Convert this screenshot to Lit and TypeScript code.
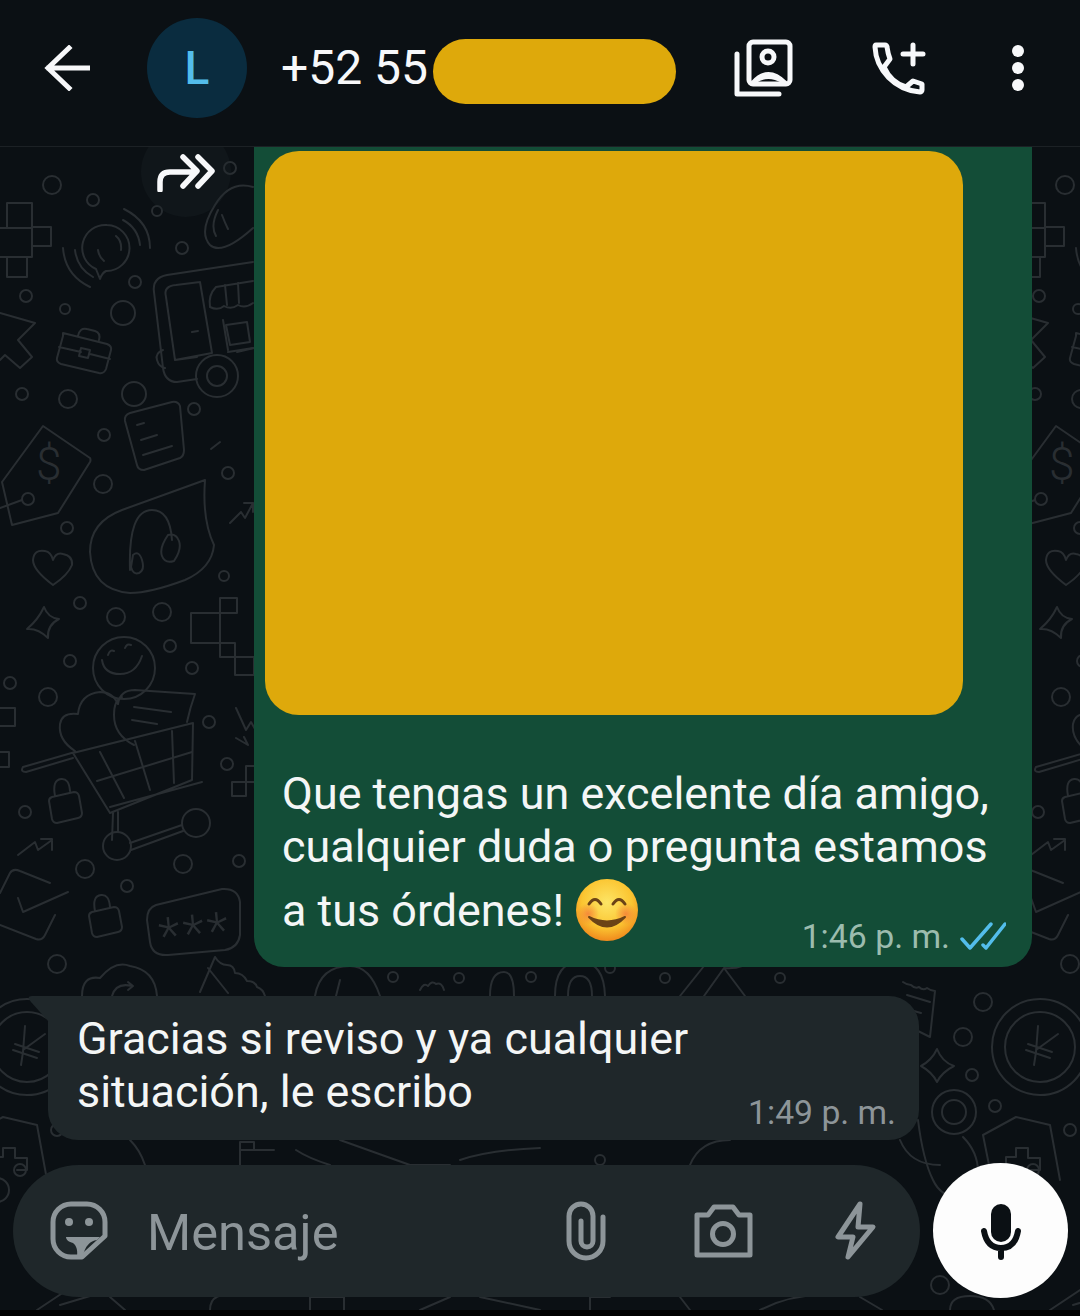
import { LitElement, html, css, svg } from "lit";
import { customElement } from "lit/decorators.js";

const circles: number[][] = [
  [52,185,9],[93,200,6],[26,296,6],[65,309,5],[135,282,6],[123,313,12],[182,248,6],[157,211,5],[22,394,6],[68,399,9],[134,394,12],[194,409,6],[104,435,6],[228,473,6],[103,484,9],[67,528,6],
  [80,603,6],[116,617,9],[162,612,9],[224,576,5],[170,646,6],[192,668,6],[70,661,6],[10,683,6],[48,697,9],[209,722,6],[227,764,6],[25,812,6],[85,869,9],[183,864,9],[239,861,6],[127,886,6],[57,964,9],
  [28,499,6],[124,668,31],[117,846,14],[196,823,14],[217,376,21],[217,376,10],
  [983,1002,9],[963,1037,9],[972,1075,6],[995,1106,6],[1070,1130,6],[954,1112,22],[954,1112,12],[1040,1047,48],[1040,1047,35],
  [393,977,5],[459,978,5],[531,977,5],[610,968,5],[665,978,5],[780,978,5],[230,168,6],[1010,1190,12],[940,1285,9],[20,1170,6],[600,1160,5],
];

const paths: string[] = [
  "M7 203h25v25H7zM32 227h19v19H32zM0 228h32v29H0M7 257h20v20H7z",
  "M107 225a23 23 0 1 1 -1 46q-4 2-6 8l-4-10a23 23 0 0 1 11-44z M124 209Q150 222 150 248M123 220Q138 228 140 245M63 248Q65 275 90 287M75 250Q77 268 93 277M116 236q6 5 5 14M98 250q1 7 6 11",
  "M253 262L167 275Q152 278 154 292L163 368Q165 382 177 382L197 379M200 282L176 285Q163 286 166 297L175 360L212 353L200 282M175 360L197 357M254 348L237 352M192 332l6-1M163 350q-8 3-6 10t8 8",
  "M210 307q-2-12 6-20l37-6M210 307q8 4 14-1q7 4 14-1q7 4 15-2M225 285l2 20M238 283l1 20M223 320l5 30M228 352l25-4M226 325l21-3l3 20l-20 3z",
  "M0 313L35 323L18 340L32 357L20 368L5 355L0 360",
  "M63 333l44 11q5 2 4 6l-5 19q-2 5-7 4l-38-9q-5-2-4-6l6-22q0-3 0-3zM78 336q2-9 9-7l8 2q6 2 4 9M59 347l22 5M90 354l20 5M81 348l9 2l-2 8l-9-2z",
  "M43 426L90 458Q91 460 90 462L58 513L12 525L2 482Z M22 500L0 508",
  "M130 413L172 402Q178 401 180 406L184 450Q184 456 180 458L144 470Q138 470 137 465L125 421Q124 415 130 413M137 425l7-2M141 440l16-5M143 455l29-9",
  "M220 442L211 449",
  "M205 480L122 510Q90 522 90 552Q92 590 130 593Q150 593 185 580Q212 568 214 545Q202 520 205 480ZM130 570Q128 510 152 510Q170 510 172 540M133 555q6-5 9 5t-3 13q-6 2-8-6zM168 535q8-2 11 6t-5 20q-9 3-12-5t6-21z",
  "M230 523L241 512L245 518L253 503M244 503h9v9",
  "M253 187Q230 180 215 205Q198 232 210 245Q222 256 253 228M218 210q-8 16-2 26M222 215q3 8 6 14",
  "M53 585Q33 570 33 560Q34 549 45 551Q51 552 53 560Q56 552 63 554Q73 556 72 565Q68 575 53 585Z",
  "M44 607Q48 618 59 619Q47 625 48 638Q38 628 27 629Q38 620 44 607Z",
  "M191 613h29v30h-29zM220 598h17v15h-17zM220 643h15v14h-15zM235 657h19v18h-19zM232 782h14v14h-14zM246 782v-16h8M232 782h22",
  "M-2 708h17v18H-2zM-2 752h11v15H-2z",
  "M236 708l10 22l5-8l8 14M236 738l12 7l-4-8",
  "M102 660q2 14 18 14t22-18M108 655q2-6 6-4M125 648q2-5 6-3",
  "M75 751Q58 740 60 724Q62 712 78 714Q80 694 100 692Q113 692 118 704M118 704Q120 690 135 690L195 694Q190 708 187 722M134 745Q114 735 114 715Q114 700 122 697M134 707l37 5M132 720l25 4",
  "M73 753L193 723L192 780L110 813ZM23 767L75 752M26 772L73 758M23 767q-3 5 3 5M110 807L202 782M113 813L112 840M118 812L118 832M130 843L182 825M131 850L183 831",
  "M100 752L124 798M135 741L150 790M97 781L192 752M172 731L174 783",
  "M52 797l22-5q4 0 5 4l3 17q0 4-4 5l-21 5q-4 0-5-4l-3-18q0-3 3-4zM55 796q-3-16 6-17q8-1 9 12",
  "M92 912l22-5q4 0 5 4l3 16q0 4-4 5l-21 5q-4 0-5-4l-3-17q0-3 3-4zM95 911q-3-15 6-16q8-1 9 12",
  "M18 855L35 842L38 850L52 840M41 839h11v11",
  "M0 893L10 873Q13 868 20 871L50 883M18 898L23 912L68 892M55 915L45 935Q42 941 36 939L0 925",
  "M156 905L222 889Q238 888 240 902L240 935Q238 948 225 950L168 955Q152 956 150 942L147 920Q147 908 156 905Z",
  "M82 996Q82 975 100 978Q115 960 130 966Q155 970 157 996M112 996Q116 982 132 986M128 982l5 4l-5 4",
  "M215 957L200 992M215 957q5 8 12 8t8 8q8 0 12 8q8 0 10 6q6 2 8 9M228 993L208 968",
  "M315 996q5-30 35-30q20 0 30 30M340 980l-4 16",
  "M420 990q4-8 8-4q4-6 8-2q6-2 8 6M490 996q0-24 14-24q10 0 10 24M555 996q0-34 25-34q24 0 25 34M568 996q0-20 12-20t12 20",
  "M680 996L712 956M704 996L724 968L745 996M724 968q18 2 30-10",
  "M903 982q4 3 8 3q4 4 8 2q4 4 8 1q4 3 8 3L930 1037q-8-4-8-4l-8-4M907 995l23 7M903 1008l18 5",
  "M937 1049Q942 1062 954 1066Q942 1072 937 1082Q932 1072 921 1066Q932 1060 937 1049Z",
  "M1038 1026L1036 1052L1034 1065M1058 1034L1036 1050M1028 1044L1052 1052M1026 1050L1050 1058",
  "M918 1120q5 40 15 60q8 17 25 17q18 0 20-25q0-20-15-35",
  "M983 1135L1016 1117L1050 1125L1060 1180M983 1135L990 1170M1006 1165v-8h10v-9h12v10h12v12h-10",
  "M240 1165v-15h34M240 1150v-8h14v8M296 1150q12 8 34 15M340 1140l70 25h40M460 1160q30-10 80-12M130 1140q10 10 15 25M690 1165q10-25 40-25M900 1140q10 25 40 25",
  "M60 1305l40-12M110 1297l15 13M210 1310q0-20 30-14M310 1310v-13h34v13M420 1310l30-13M480 1297l60 13M590 1310v-13h20M680 1297l10 13M760 1310q30-15 60-15M860 1297l22 13M950 1310q0-14 20-14q20 0 24 14M1050 1310l30-20",
];

const doodles = svg`
  <defs>
    <g id="d" fill="none" stroke="#292e32" stroke-width="2" stroke-linecap="round" stroke-linejoin="round">
      ${circles.map(c => svg`<circle cx=${c[0]} cy=${c[1]} r=${c[2]}></circle>`)}
      ${paths.map(p => svg`<path d=${p}></path>`)}
      <text x="36" y="480" font-size="46" font-family="Roboto, sans-serif" font-weight="300" fill="#292e32" stroke="none">$</text>
      <text x="158" y="950" font-size="50" font-family="Roboto, sans-serif" font-weight="300" fill="#292e32" stroke="none" letter-spacing="3" transform="rotate(-6 193 925)">***</text>
    </g>
  </defs>
  <use href="#d"></use>
  <use href="#d" x="1013"></use>
  <use href="#d" x="-1013"></use>
`;

@customElement("app-root")
export class AppRoot extends LitElement {
  static styles = css`
    :host { display: block; width: 1080px; height: 1316px; font-family: Roboto, "Liberation Sans", sans-serif; }
    .page { position: relative; width: 1080px; height: 1316px; background: #0b1014; overflow: hidden; display: flex; flex-direction: column; }
    .wall { position: absolute; left: 0; top: 0; width: 1080px; height: 1316px; }
    .head { position: relative; height: 136px; padding-bottom: 10px; background: #0b1014; border-bottom: 1px solid #1c2125; flex: none; display: flex; align-items: center; padding-left: 44px; box-sizing: content-box; }
    .back { width: 46px; height: 46px; flex: none; }
    .avatar { margin-left: 57px; width: 100px; height: 100px; border-radius: 50%; background: #0a2c3f; color: #53bdeb; font-size: 46px; font-weight: 500; display: flex; align-items: center; justify-content: center; flex: none; }
    .num { margin: 0 0 2px 34px; color: #f7f8fa; font-size: 48px; white-space: nowrap; width: 152px; flex: none; }
    .red { width: 243px; height: 65px; border-radius: 33px; background: #dea90b; flex: none; margin-top: 7px; }
    .hicons { margin-left: 58px; display: flex; align-self: flex-start; }
    .chat { position: relative; flex: 1; display: flex; flex-direction: column; align-items: flex-start; overflow: hidden; }
    .fwd { position: absolute; left: 141px; top: -20px; width: 90px; height: 90px; border-radius: 50%; background: rgba(31,39,42,.25); display: flex; align-items: center; justify-content: center; }
    .fwd svg { margin-left: -2px; }
    .out { margin-left: 254px; width: 778px; height: 820px; box-sizing: border-box; flex: none; background: #134d37; border-radius: 0 0 30px 30px; padding: 4px 0 0 11px; color: #f4f6f6; font-size: 44.9px; display: flex; flex-direction: column; }
    .photo { width: 698px; height: 564px; background: #dea90b; border-radius: 34px; flex: none; }
    .body { margin: 52px 0 0 17px; }
    .ln { height: 53px; line-height: 53px; white-space: nowrap; }
    .ln3 { height: 64px; display: flex; align-items: flex-end; padding-right: 25px; box-sizing: border-box; width: 749px; margin-top: 5px; line-height: 53px; }
    .ln3 > span { margin-bottom: 5px; }
    .emoji { width: 64px; height: 64px; margin-left: 11px; flex: none; }
    .meta { margin: 0 0 -15px auto; display: flex; align-items: center; gap: 10px; color: #9cbcae; font-size: 33.8px; line-height: 40px; }
    .in { position: relative; margin: 29px 0 0 48px; width: 871px; height: 144px; box-sizing: border-box; flex: none; background: #1f272a; border-radius: 0 30px 30px 30px; padding: 16px 23px 0 29px; color: #f4f6f6; font-size: 44.9px; }
    .tail { position: absolute; left: -20px; top: 0; width: 21px; height: 26px; }
    .meta2 { color: #8d9599; font-size: 33.7px; line-height: 40px; text-align: right; margin-top: -25px; }
    .bar { margin: 23px 0 0 13px; display: flex; gap: 13px; align-items: center; flex: none; }
    .pill { width: 907px; height: 132px; background: #1f272a; border-radius: 66px; display: flex; align-items: center; position: relative; }
    .ms { margin: 3px 0 0 134px; font-size: 50.6px; color: #8d9599; }
    .mic { width: 135px; height: 135px; border-radius: 50%; background: #fdfdfd; display: flex; align-items: center; justify-content: center; }
    .strip { width: 1080px; height: 6px; background: #000; flex: none; margin-top: auto; position: relative; }
    .ic { position: absolute; left: 0; top: 0; width: 907px; height: 132px; }
    .gr { fill: none; stroke: #8d9599; stroke-width: 5; stroke-linejoin: round; stroke-linecap: round; }
    .wh { fill: none; stroke: #f7f8fa; stroke-width: 5; stroke-linejoin: round; stroke-linecap: round; }
  `;

  render() {
    return html`
      <div class="page">
        <svg class="wall" viewBox="0 0 1080 1316">${doodles}</svg>
        <div class="head">
          <svg class="back" viewBox="44 45 46 46"><path d="M88 68H49M69 48L48 68L69 88" fill="none" stroke="#f7f8fa" stroke-width="5" stroke-linecap="square"/></svg>
          <div class="avatar">L</div>
          <div class="num">+52 55</div>
          <div class="red"></div>
          <div class="hicons">
            <svg width="300" height="146" viewBox="734 0 300 146">
              <rect class="wh" x="749" y="42" width="41" height="42" rx="4"/>
              <path class="wh" d="M737 54V94H779"/>
              <circle class="wh" cx="768" cy="57" r="6" stroke-width="4.5"/>
              <path d="M752 82Q768 64 786 82L782 82Q768 74 756 82Z" fill="#f7f8fa" stroke="#f7f8fa" stroke-width="2" stroke-linejoin="round"/>
              <path class="wh" d="M876 45H885C886 45 887 46 887 47Q888 54 890 59L884 67C888 76 896 84 906 87L913 81Q919 83 922 84V90C922 91 921 92 920 92C895 90 876 70 875 47C875 46 875 45 876 45Z"/>
              <path class="wh" d="M913 45V64M903 54H923"/>
              <circle cx="1018" cy="51" r="6" fill="#f7f8fa"/>
              <circle cx="1018" cy="68" r="6" fill="#f7f8fa"/>
              <circle cx="1018" cy="85" r="6" fill="#f7f8fa"/>
            </svg>
          </div>
        </div>
        <div class="chat">
          <div class="out">
            <div class="photo"></div>
            <div class="body">
              <div class="ln">Que tengas un excelente día amigo,</div>
              <div class="ln">cualquier duda o pregunta estamos</div>
              <div class="ln3">
                <span>a tus órdenes!</span>
                <svg class="emoji" viewBox="0 0 64 64">
                  <defs>
                    <radialGradient id="fg" cx="50%" cy="38%" r="62%">
                      <stop offset="0" stop-color="#fde566"/><stop offset=".65" stop-color="#fbc531"/><stop offset="1" stop-color="#f08a1d"/>
                    </radialGradient>
                    <radialGradient id="ch"><stop offset="0" stop-color="#f4763a" stop-opacity=".75"/><stop offset="1" stop-color="#f4763a" stop-opacity="0"/></radialGradient>
                  </defs>
                  <circle cx="32" cy="32" r="31" fill="url(#fg)"/>
                  <circle cx="13" cy="36" r="11" fill="url(#ch)"/>
                  <circle cx="51" cy="36" r="11" fill="url(#ch)"/>
                  <path d="M14 26q6-9 12 0M38 26q6-9 12 0" fill="none" stroke="#6b4316" stroke-width="3" stroke-linecap="round"/>
                  <path d="M14 39Q32 58 50 39Q32 48 14 39Z" fill="#6b4316" stroke="#6b4316" stroke-width="2" stroke-linejoin="round"/>
                </svg>
                <div class="meta">
                  <span>1:46 p. m.</span>
                  <svg width="46" height="30" viewBox="0 0 46 30"><path d="M2 17L10 26L31 2M23 23L26 26L45 2" fill="none" stroke="#53bdeb" stroke-width="3.5" stroke-linecap="round" stroke-linejoin="round"/></svg>
                </div>
              </div>
            </div>
          </div>
          <div class="fwd">
            <svg width="60" height="40" viewBox="155 152 60 40"><path d="M160 190V182Q160 172 170 172H196M183 157L197 171L183 186M198 157L212 171L198 186" fill="none" stroke="#f7f8fa" stroke-width="5.5" stroke-linecap="round" stroke-linejoin="round"/></svg>
          </div>
          <div class="in">
            <svg class="tail" viewBox="0 0 21 26"><path d="M21 0H4Q-2 0 3 6L21 26Z" fill="#1f272a"/></svg>
            <div class="ln">Gracias si reviso y ya cualquier</div>
            <div class="ln">situación, le escribo</div>
            <div class="meta2">1:49 p. m.</div>
          </div>
          <div class="bar">
            <div class="pill">
              <svg class="ic" viewBox="13 1165 907 132">
                <path class="gr" d="M71 1204H87A18 18 0 0 1 105 1222V1236L82 1257H71A18 18 0 0 1 53 1239V1222A18 18 0 0 1 71 1204Z"/>
                <circle cx="69" cy="1222" r="4" fill="#8d9599"/><circle cx="89" cy="1222" r="4" fill="#8d9599"/>
                <path d="M66 1237H100L97 1240C90 1241 85 1246 83 1256H77C78 1250 76 1245 73 1243C69 1242 66 1240 66 1237Z" fill="#8d9599"/>
                <path class="gr" d="M603 1217V1241A17 17 0 0 1 569 1241V1216A12 12 0 0 1 593 1216V1241A6 6 0 0 1 581 1241V1221"/>
                <path class="gr" d="M697 1215H708L714 1207H733L739 1215H750V1255H697Z"/>
                <circle class="gr" cx="723" cy="1234" r="10.5" stroke-width="6"/>
                <path class="gr" d="M860 1204L838 1237L853 1237L848 1257L873 1227L858 1227Z"/>
              </svg>
              <div class="ms">Mensaje</div>
            </div>
            <div class="mic">
              <svg width="50" height="60" viewBox="976 1200 50 60">
                <rect x="991" y="1203" width="20" height="38" rx="10" fill="#0b1014"/>
                <path d="M984 1230Q987 1247 1001 1247Q1015 1247 1018 1230M1001 1247V1256" fill="none" stroke="#0b1014" stroke-width="6" stroke-linecap="round"/>
              </svg>
            </div>
          </div>
          <div class="strip"></div>
        </div>
      </div>
    `;
  }
}
